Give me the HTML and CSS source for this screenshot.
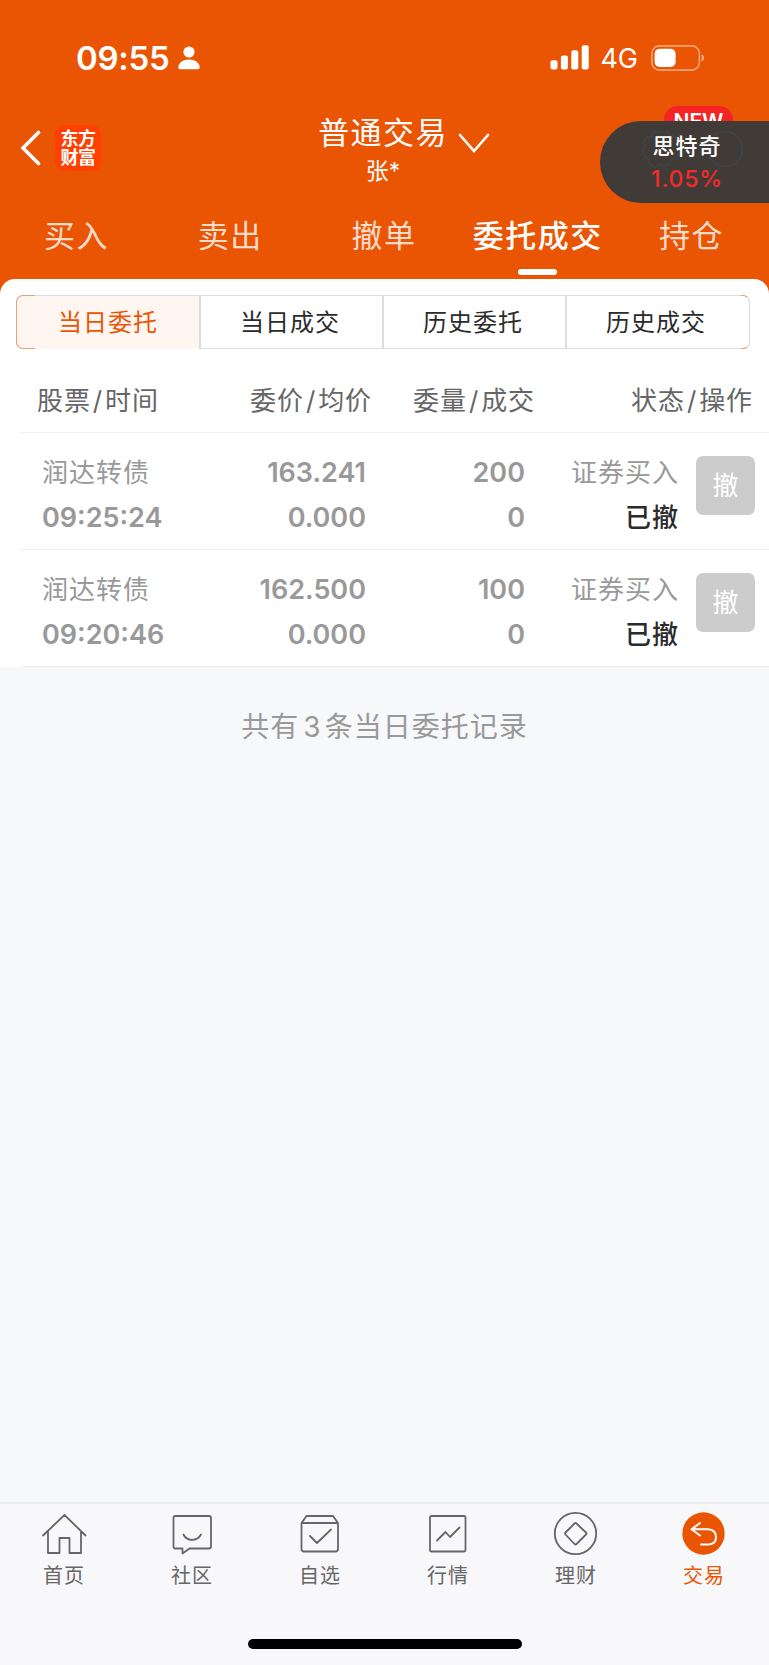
FILE: index.html
```
<!DOCTYPE html>
<html lang="zh-CN">
<head>
  <meta charset="UTF-8">
  <title>委托成交</title>
  <link rel="stylesheet" href="styles.css">
</head>
<body>

<header>
  <!-- Status bar -->
  <div class="status">
    <span class="clock">09:55</span>
    <svg class="person" width="22" height="24" viewBox="0 0 22 24">
      <circle cx="11" cy="6" r="5.6" fill="#fff"/>
      <path d="M0.3 21.5C0.3 17 5 13.6 11 13.6S21.700 17 21.700 21.500Q21.700 23.300 19.800 23.300H2.200Q0.300 23.300 0.300 21.500Z" fill="#fff"/>
    </svg>
    <svg class="signal" width="39" height="25" viewBox="0 0 39 25">
      <g fill="#fff">
        <rect x="0.500" y="15.300" width="7" height="9.200" rx="2"/>
        <rect x="10.900" y="10.600" width="7" height="13.900" rx="2"/>
        <rect x="21.300" y="5.300" width="7" height="19.200" rx="2"/>
        <rect x="31.700" y="0.300" width="7" height="24.200" rx="2"/>
      </g>
    </svg>
    <span class="network">4G</span>
    <svg class="battery" width="54" height="26" viewBox="0 0 54 26">
      <rect x="0.900" y="0.900" width="47.500" height="24.200" rx="7.500" fill="none" stroke="#fff" stroke-opacity="0.450" stroke-width="1.600"/>
      <rect x="3.600" y="3.800" width="21" height="18.200" rx="5" fill="#fff"/>
      <path d="M50.600 9.200Q53.200 10.300 53.200 13T50.600 16.800Z" fill="#fff" fill-opacity="0.500"/>
    </svg>
  </div>

  <!-- Title bar -->
  <div class="titlebar">
    <svg class="back" width="22" height="36" viewBox="0 0 22 36">
      <path d="M18.500 2.500L3 18L18.500 33.500" fill="none" stroke="#fff" stroke-width="3.600" stroke-linecap="round"/>
    </svg>
    <div class="logo">东方<br>财富</div>
    <div class="account">
      <div class="account-type">普通交易</div>
      <div class="account-name">张*</div>
    </div>
    <svg class="arrow" width="32" height="22" viewBox="0 0 32 22">
      <path d="M2 2L16 18L30 2" fill="none" stroke="#fff" stroke-width="2.600" stroke-linecap="round"/>
    </svg>
    <div class="new-badge">NEW</div>
    <div class="float">
      <svg class="float-icons" width="104" height="42" viewBox="0 0 104 42">
        <g fill="none" stroke="#3e4347" stroke-width="2">
          <path d="M14 4Q20 7 26 4L30 9Q37 10 37 15Q35 20 39 24Q36 31 31 32Q28 39 23 39Q19 36 14 40Q7 38 8 32Q2 30 2 24Q6 20 2 16Q5 9 10 10Z"/>
          <circle cx="84" cy="22" r="17.500"/>
        </g>
      </svg>
      <div class="float-name">思特奇</div>
      <div class="float-rate">1.05%</div>
    </div>
  </div>

  <nav class="tabs">
    <div class="tab">买入</div>
    <div class="tab">卖出</div>
    <div class="tab">撤单</div>
    <div class="tab active">委托成交</div>
    <div class="tab">持仓</div>
  </nav>
</header>

<main>
  <div class="panel">
    <div class="segments">
      <div class="segment selected">当日委托</div>
      <div class="segment">当日成交</div>
      <div class="segment">历史委托</div>
      <div class="segment">历史成交</div>
    </div>

    <div class="table-head">
      <div>股票<i>/</i>时间</div>
      <div>委价<i>/</i>均价</div>
      <div>委量<i>/</i>成交</div>
      <div>状态<i>/</i>操作</div>
    </div>

    <!-- Orders -->
    <div class="order">
      <div class="cell"><p>润达转债</p><p class="num">09:25:24</p></div>
      <div class="cell"><p class="num">163.241</p><p class="num">0.000</p></div>
      <div class="cell"><p class="num">200</p><p class="num">0</p></div>
      <div class="cell"><p>证券买入</p><p class="state">已撤</p></div>
      <div class="cancel">撤</div>
    </div>
    <div class="order">
      <div class="cell"><p>润达转债</p><p class="num">09:20:46</p></div>
      <div class="cell"><p class="num">162.500</p><p class="num">0.000</p></div>
      <div class="cell"><p class="num">100</p><p class="num">0</p></div>
      <div class="cell"><p>证券买入</p><p class="state">已撤</p></div>
      <div class="cancel">撤</div>
    </div>
  </div>
  <p class="summary">共有<span>3</span>条当日委托记录</p>
</main>

<footer>
  <div class="menu">
    <div class="menu-item">
      <svg width="46" height="46" viewBox="0 0 46 46">
        <path d="M2 24.500L23.500 4L44.500 24.500M7 20V42H18.500V27H28.500V42H40V20"/>
      </svg>
      首页
    </div>
    <div class="menu-item">
      <svg width="46" height="46" viewBox="0 0 46 46">
        <path d="M6 5H40Q42 5 42 7V35.500Q42 37.500 40 37.500H20.500L13.500 42.500V37.500H6Q4.500 37.500 4.500 35.500V7Q4.500 5 6 5ZM14.500 23.500Q17 28.800 23 28.800T32 23.500"/>
      </svg>
      社区
    </div>
    <div class="menu-item">
      <svg width="46" height="46" viewBox="0 0 46 46">
        <path d="M4.500 12L9.500 5H36L41 12V38Q41 40.500 38.500 40.500H7Q4.500 40.500 4.500 38ZM4.500 12H41M13 25L20 32L34 18.500"/>
      </svg>
      自选
    </div>
    <div class="menu-item">
      <svg width="46" height="46" viewBox="0 0 46 46">
        <rect x="5" y="5" width="35.500" height="35.500" rx="1.500"/>
        <path d="M12 29.500L20.500 21L25 26L34.500 16.500"/>
      </svg>
      行情
    </div>
    <div class="menu-item">
      <svg width="46" height="46" viewBox="0 0 46 46">
        <circle cx="22.500" cy="22.500" r="20.700"/>
        <path d="M21.500 12.500Q22.500 11.500 23.500 12.500L33 21.500Q34 22.500 33 23.500L23.500 33Q22.500 34 21.500 33L12.500 23.500Q11.500 22.500 12.500 21.500Z"/>
      </svg>
      理财
    </div>
    <div class="menu-item current">
      <svg width="46" height="46" viewBox="0 0 46 46">
        <circle class="disc" cx="22.500" cy="22.500" r="21.200"/>
        <path d="M19 12L10.500 18.300L19 24.500M11 18.300H27Q35 18.800 35 26Q35 33.500 27 33.500H20"/>
      </svg>
      交易
    </div>
  </div>
  <div class="home-bar"></div>
</footer>

</body>
</html>
```
FILE: styles.css
```
* {
  box-sizing: border-box;
}

body {
  margin: 0;
  height: 1665px;
  display: flex;
  flex-direction: column;
  background-color: #f7f8fa;
  font-family: Inter, "Noto Sans CJK SC", sans-serif;
  overflow: hidden;
}

p {
  margin: 0;
}

svg {
  display: block;
  flex: none;
}

header {
  height: 294px;
  flex: none;
  background-color: #ea5504;
  color: #fff;
}

.status {
  height: 115px;
  display: flex;
  align-items: center;
  padding: 0 64px 0 76px;
}

.clock {
  font-size: 33px;
  font-weight: 600;
  letter-spacing: -0.3px;
}

.person {
  margin-left: 9px;
}

.signal {
  margin-left: auto;
}

.network {
  margin: 1px 13px 0 11px;
  font-size: 27px;
}

.titlebar {
  position: relative;
  height: 87px;
  display: flex;
  align-items: flex-start;
  padding-left: 20px;
}

.back {
  margin-top: 15px;
}

.logo {
  width: 46px;
  height: 46px;
  margin: 10px 0 0 13px;
  padding-top: 4px;
  border-radius: 9px;
  background-color: #ff4000;
  font-size: 18px;
  font-weight: 700;
  line-height: 19px;
  letter-spacing: -0.5px;
  text-align: center;
}

.account {
  width: 140px;
  margin-left: 212px;
  text-align: center;
}

.account-type {
  font-size: 31px;
  letter-spacing: 1.4px;
  line-height: 35px;
}

.account-name {
  font-size: 23px;
  line-height: 43px;
}

.arrow {
  margin: 18px 0 0 5px;
}

.new-badge {
  position: absolute;
  top: -9px;
  right: 36px;
  width: 69px;
  height: 32px;
  border-radius: 14px;
  background-color: #f52323;
  font-size: 21px;
  font-weight: 600;
  line-height: 31px;
  text-align: center;
}

/* Floating quote over the right edge */
.float {
  position: absolute;
  top: 6px;
  right: 0;
  width: 169px;
  height: 82px;
  padding: 9px 0 0 5px;
  border-radius: 41px 0 0 41px;
  background-color: #413b37;
  text-align: center;
}

.float-icons {
  position: absolute;
  top: 6px;
  left: 41px;
}

.float-name {
  position: relative;
  font-size: 22px;
  font-weight: 500;
  letter-spacing: 1px;
  line-height: 33px;
}

.float-rate {
  position: relative;
  color: #f52a2a;
  font-size: 23px;
  font-weight: 500;
  line-height: 32px;
  letter-spacing: 0.8px;
}

.tabs {
  display: grid;
  grid-template-columns: repeat(5, 1fr);
  height: 77px;
}

.tab {
  position: relative;
  padding-right: 1px;
  color: #fbdccb;
  font-size: 31px;
  letter-spacing: 1.5px;
  line-height: 68px;
  text-align: center;
}

.tab.active {
  color: #fff;
  font-weight: 500;
}

.tab.active::after {
  content: "";
  position: absolute;
  left: 57px;
  bottom: 4px;
  width: 39px;
  height: 6px;
  border-radius: 3px;
  background-color: #fff;
}

main {
  flex: 1;
  margin-top: -15px;
}

.panel {
  border-radius: 15px 15px 0 0;
  background-color: #fff;
  padding-top: 16px;
}

.segments {
  position: relative;
  display: grid;
  grid-template-columns: repeat(4, 1fr);
  height: 54px;
  margin: 0 19px 0 16px;
  border: 1px solid #dadee4;
  border-radius: 7px;
}

/* orange tint that shows at both rounded ends */
.segments::before,
.segments::after {
  content: "";
  position: absolute;
  top: -1px;
  bottom: -1px;
  border: 1px solid #eba07a;
}

.segments::before {
  left: -1px;
  width: 18px;
  border-right: none;
  border-radius: 7px 0 0 7px;
}

.segments::after {
  right: -1px;
  width: 8px;
  border-left: none;
  border-right-color: #dadee4;
  border-radius: 0 7px 7px 0;
}

.segment {
  padding-right: 4px;
  color: #2b2b2b;
  font-size: 24px;
  letter-spacing: 1px;
  line-height: 53px;
  text-align: center;
}

.segment + .segment {
  margin-left: -1px;
  border-left: 2px solid #dadee4;
}

.segment.selected {
  padding-right: 1px;
  border-radius: 6px 0 0 6px;
  background-color: #fff6f2;
  color: #ea5504;
}

.table-head {
  display: grid;
  grid-template-columns: 162px 173px 163px 1fr;
  height: 84px;
  margin-left: 20px;
  padding: 0 16px 0 17px;
  border-bottom: 1px solid #eff0f2;
  color: #666;
  font-size: 26px;
  letter-spacing: 0.9px;
  line-height: 103px;
  text-align: right;
}

.table-head div:first-child,
.cell:first-child {
  text-align: left;
}

.table-head i {
  margin: 0 2px;
  font-style: normal;
}

.order {
  display: grid;
  grid-template-columns: 162px 162px 159px 154px 59px;
  height: 117px;
  margin-left: 20px;
  padding-left: 22px;
  border-bottom: 1px solid #eff0f2;
  color: #999;
}

.cell {
  padding-top: 17px;
  font-size: 26px;
  letter-spacing: 1px;
  line-height: 45px;
  text-align: right;
}

.num {
  font-size: 27px;
  font-weight: 600;
  letter-spacing: 0;
}

.state {
  color: #2b2b2b;
  font-weight: 500;
}

.cancel {
  width: 59px;
  height: 59px;
  margin: 23px 0 0 17px;
  border-radius: 7px;
  background-color: #ccc;
  color: #fff;
  font-size: 26px;
  line-height: 60px;
  text-align: center;
}

.summary {
  color: #999;
  font-size: 28px;
  letter-spacing: 1px;
  line-height: 120px;
  text-align: center;
}

.summary span {
  margin: 0 3px 0 4px;
}

footer {
  height: 163px;
  flex: none;
  border-top: 2px solid #e9eaed;
  background-color: #f8f8fb;
}

.menu {
  display: grid;
  grid-template-columns: repeat(6, 1fr);
  height: 135px;
  padding: 7px 1px 0 0;
}

.menu-item {
  display: flex;
  flex-direction: column;
  align-items: center;
  color: #666;
  font-size: 20px;
  letter-spacing: 1px;
  line-height: 38px;
}

.menu-item svg {
  fill: none;
  stroke: #666;
  stroke-width: 1.8;
  stroke-linecap: round;
  stroke-linejoin: round;
}

.menu-item.current {
  color: #ea5504;
}

.current svg {
  stroke: #fff;
  stroke-width: 2;
}

.current .disc {
  fill: #ea5504;
  stroke: none;
}

.home-bar {
  width: 274px;
  height: 10px;
  margin: 0 auto;
  border-radius: 5px;
  background-color: #000;
}
```
